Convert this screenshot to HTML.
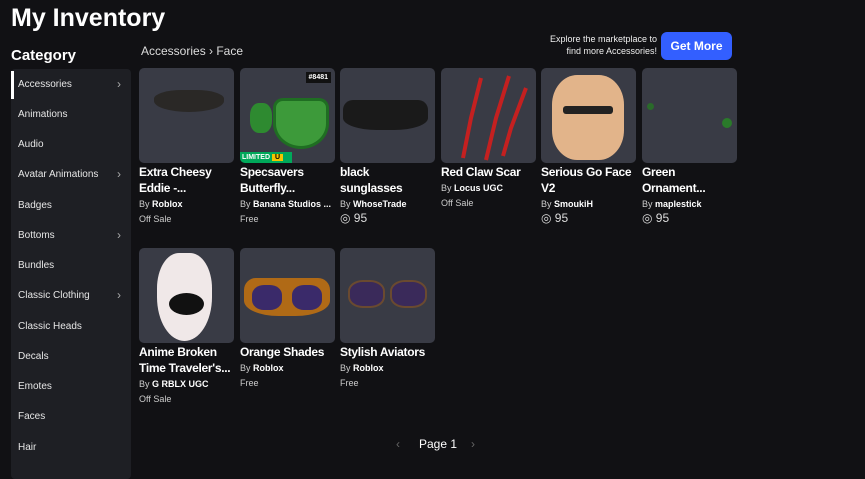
<html><head><style>
body{margin:0;width:865px;height:473px;background:#111114;font-family:"Liberation Sans",sans-serif;color:#fff;position:relative;overflow:hidden}
.a{position:absolute}
h1{position:absolute;left:11px;top:4px;margin:0;font-size:25px;font-weight:bold}
.side{left:11px;top:69px;width:120px;height:410px;background:#1e1f24;border-radius:4px}
.side div{position:absolute;left:7px;font-size:10px;color:#e6e6e6}
.side span{position:absolute;left:106px;color:#aaa;font-size:12px}
.card{position:absolute;width:95px}
.th{width:95px;height:95px;background:#393b45;border-radius:5px;position:relative;overflow:hidden}
.t{font-size:12px;font-weight:bold;margin-top:1px;line-height:16px;letter-spacing:-0.3px;display:-webkit-box;-webkit-line-clamp:2;-webkit-box-orient:vertical;overflow:hidden;white-space:normal}
.by{font-size:9px;color:#ccc;margin-top:3px;white-space:nowrap;overflow:hidden}
.by b{color:#fff}
.p{font-size:9px;color:#ccc;margin-top:5px}
.r{font-size:12px;color:#ddd;margin-top:2px}
</style></head><body>
<h1>My Inventory</h1>
<div class="a" style="left:11px;top:47px;font-size:15px;font-weight:bold">Category</div>
<div class="a" style="left:141px;top:44px;font-size:12px;color:#ddd">Accessories › Face</div>
<div class="a" style="left:540px;top:33px;font-size:9px;text-align:right;width:117px;line-height:12px;color:#eee">Explore the marketplace to find more Accessories!</div>
<div class="a" style="left:661px;top:32px;width:71px;height:28px;background:#335fff;border-radius:6px;font-size:12px;font-weight:bold;text-align:center;line-height:28px">Get More</div>
<div class="a side">
<div style="left:0;top:2px;width:3px;height:28px;background:#fff"></div>
<div style="top:10px">Accessories</div><span style="top:8px">›</span>
<div style="top:40px">Animations</div>
<div style="top:70px">Audio</div>
<div style="top:100px">Avatar Animations</div><span style="top:98px">›</span>
<div style="top:131px">Badges</div>
<div style="top:161px">Bottoms</div><span style="top:159px">›</span>
<div style="top:191px">Bundles</div>
<div style="top:221px">Classic Clothing</div><span style="top:219px">›</span>
<div style="top:252px">Classic Heads</div>
<div style="top:282px">Decals</div>
<div style="top:312px">Emotes</div>
<div style="top:342px">Faces</div>
<div style="top:373px">Hair</div>
</div>

<div class="card" style="left:139px;top:68px"><div class="th"><div class="a" style="left:15px;top:22px;width:70px;height:22px;background:#2a2826;border-radius:40% 40% 50% 50%"></div></div><div class="t">Extra Cheesy Eddie -...</div><div class="by">By <b>Roblox</b></div><div class="p">Off Sale</div></div>
<div class="card" style="left:240px;top:68px"><div class="th"><div class="a" style="right:4px;top:4px;background:#111;font-size:7px;padding:2px 3px;font-weight:bold">#8481</div><div class="a" style="left:10px;top:35px;width:22px;height:30px;background:#2e8a30;border-radius:40%"></div><div class="a" style="left:33px;top:30px;width:50px;height:45px;background:#3d9a3a;border:3px solid #1f6e22;border-radius:10px 10px 50% 50%"></div><div class="a" style="left:0;top:84px;width:50px;height:11px;background:#00a85a;font-size:7px;font-weight:bold;line-height:11px;padding-left:2px">LIMITED <span style="background:#f5c400;color:#000;padding:0 3px">U</span></div></div><div class="t">Specsavers Butterfly...</div><div class="by">By <b>Banana Studios ...</b></div><div class="p">Free</div></div>
<div class="card" style="left:340px;top:68px"><div class="th"><div class="a" style="left:3px;top:32px;width:85px;height:30px;background:#1a1a1a;border-radius:10px 10px 40% 40%"></div></div><div class="t">black<br>sunglasses</div><div class="by">By <b>WhoseTrade</b></div><div class="r">◎ 95</div></div>
<div class="card" style="left:441px;top:68px"><div class="th"><svg class="a" width="95" height="95"><g stroke="#c42020" stroke-width="4" fill="none"><path d="M40 10 L30 50 L22 90"/><path d="M68 8 L55 50 L45 92"/><path d="M85 20 L70 60 L62 88"/></g></svg></div><div class="t">Red Claw Scar</div><div class="by">By <b>Locus UGC</b></div><div class="p">Off Sale</div></div>
<div class="card" style="left:541px;top:68px"><div class="th"><div class="a" style="left:11px;top:7px;width:72px;height:85px;background:#e2b48a;border-radius:35%"></div><div class="a" style="left:22px;top:38px;width:50px;height:8px;background:#222;border-radius:3px"></div></div><div class="t">Serious Go Face V2</div><div class="by">By <b>SmoukiH</b></div><div class="r">◎ 95</div></div>
<div class="card" style="left:642px;top:68px"><div class="th"><div class="a" style="left:5px;top:35px;width:7px;height:7px;background:#2a6a2a;border-radius:50%"></div><div class="a" style="left:80px;top:50px;width:10px;height:10px;background:#2a7a2a;border-radius:50%"></div></div><div class="t">Green Ornament...</div><div class="by">By <b>maplestick</b></div><div class="r">◎ 95</div></div>

<div class="card" style="left:139px;top:248px"><div class="th"><div class="a" style="left:18px;top:5px;width:55px;height:88px;background:#f0e8e8;border-radius:40% 40% 50% 50%"></div><div class="a" style="left:30px;top:45px;width:35px;height:22px;background:#111;border-radius:50%"></div></div><div class="t">Anime Broken Time Traveler's...</div><div class="by">By <b>G RBLX UGC</b></div><div class="p">Off Sale</div></div>
<div class="card" style="left:240px;top:248px"><div class="th"><div class="a" style="left:4px;top:30px;width:86px;height:38px;background:#b06a16;border-radius:12px 12px 40% 40%"></div><div class="a" style="left:12px;top:37px;width:30px;height:25px;background:#3a2a6a;border-radius:40%"></div><div class="a" style="left:52px;top:37px;width:30px;height:25px;background:#3a2a6a;border-radius:40%"></div></div><div class="t">Orange Shades</div><div class="by">By <b>Roblox</b></div><div class="p">Free</div></div>
<div class="card" style="left:340px;top:248px"><div class="th"><div class="a" style="left:8px;top:32px;width:33px;height:24px;background:#3a2a5a;border:2px solid #6a4a30;border-radius:40%"></div><div class="a" style="left:50px;top:32px;width:33px;height:24px;background:#3a2a5a;border:2px solid #6a4a30;border-radius:40%"></div></div><div class="t">Stylish Aviators</div><div class="by">By <b>Roblox</b></div><div class="p">Free</div></div>

<div class="a" style="left:396px;top:437px;font-size:12px;color:#666">‹</div>
<div class="a" style="left:419px;top:437px;font-size:12px">Page 1</div>
<div class="a" style="left:471px;top:437px;font-size:12px;color:#666">›</div>
</body></html>
